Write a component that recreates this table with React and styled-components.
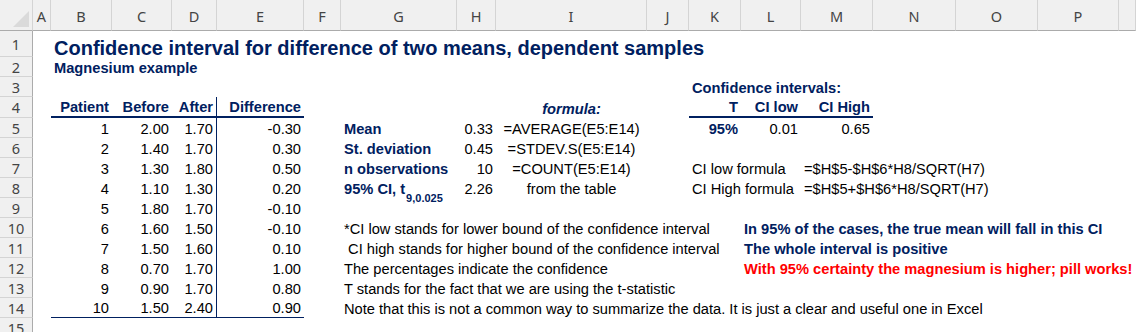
import React from "react";
import styled, { createGlobalStyle } from "styled-components";

const NAVY = "#002060";
const letters = ["A", "B", "C", "D", "E", "F", "G", "H", "I", "J", "K", "L", "M", "N", "O", "P", ""];
const col = (l) => letters.indexOf(l) + 2;

const data = [
  [1, "2.00", "1.70", "-0.30"],
  [2, "1.40", "1.70", "0.30"],
  [3, "1.30", "1.80", "0.50"],
  [4, "1.10", "1.30", "0.20"],
  [5, "1.80", "1.70", "-0.10"],
  [6, "1.60", "1.50", "-0.10"],
  [7, "1.50", "1.60", "0.10"],
  [8, "0.70", "1.70", "1.00"],
  [9, "0.90", "1.70", "0.80"],
  [10, "1.50", "2.40", "0.90"],
];

const stats = [
  ["Mean", "0.33", "=AVERAGE(E5:E14)"],
  ["St. deviation", "0.45", "=STDEV.S(E5:E14)"],
  ["n observations", "10", "=COUNT(E5:E14)"],
  [null, "2.26", "from the table"],
];

const notes = [
  "*CI low stands for lower bound of the confidence interval",
  " CI high stands for higher bound of the confidence interval",
  "The percentages indicate the confidence",
  "T stands for the fact that we are using the t-statistic",
  "Note that this is not a common way to summarize the data. It is just a clear and useful one in Excel",
];

const App = () => {
  return (
    <>
      <GlobalStyle />
      <Sheet>
        <Corner>
          <svg width="33" height="30" viewBox="0 0 33 30">
            <polygon points="13,27 29,27 29,11" fill="#dadada" />
          </svg>
        </Corner>
        {letters.map((l, i) => (
          <ColHead key={"c" + i} $c={i + 2}>{l}</ColHead>
        ))}
        {Array.from({ length: 15 }).map((_, i) => (
          <RowHead key={"r" + i} $r={i + 2}>{i + 1}</RowHead>
        ))}

        {/* titel */}
        <Cell $c={col("B")} $r={2} $span={10} $bold $navy $size="20px">
          Confidence interval for difference of two means, dependent samples
        </Cell>
        <Cell $c={col("B")} $r={3} $span={5} $bold $navy>Magnesium example</Cell>
        <Cell $c={col("K")} $r={4} $span={4} $bold $navy>Confidence intervals:</Cell>

        {/* kopjes */}
        <Cell $c={col("B")} $r={5} $right $bold $navy $thick>Patient</Cell>
        <Cell $c={col("C")} $r={5} $right $bold $navy $thick>Before</Cell>
        <Cell $c={col("D")} $r={5} $right $bold $navy $thick $divider>After</Cell>
        <Cell $c={col("E")} $r={5} $right $bold $navy $thick>Difference</Cell>
        <Cell $c={col("I")} $r={5} $center $bold $italic $navy>formula:</Cell>
        <Cell $c={col("K")} $r={5} $right $bold $navy $thick>T</Cell>
        <Cell $c={col("L")} $r={5} $right $bold $navy $thick>CI low</Cell>
        <Cell $c={col("M")} $r={5} $right $bold $navy $thick>CI High</Cell>

        {data.map((d, i) => (
          <React.Fragment key={"d" + i}>
            <Cell $c={col("B")} $r={i + 6} $right $thin={i === 9}>{d[0]}</Cell>
            <Cell $c={col("C")} $r={i + 6} $right $thin={i === 9}>{d[1]}</Cell>
            <Cell $c={col("D")} $r={i + 6} $right $thin={i === 9} $divider>{d[2]}</Cell>
            <Cell $c={col("E")} $r={i + 6} $right $thin={i === 9}>{d[3]}</Cell>
          </React.Fragment>
        ))}

        {stats.map((s, i) => (
          <React.Fragment key={"s" + i}>
            <Cell $c={col("G")} $r={i + 6} $bold $navy>
              {s[0] || (
                <>
                  95% CI, t<Sub>9,0.025</Sub>
                </>
              )}
            </Cell>
            <Cell $c={col("H")} $r={i + 6} $right>{s[1]}</Cell>
            <Cell $c={col("I")} $r={i + 6} $center>{s[2]}</Cell>
          </React.Fragment>
        ))}

        <Cell $c={col("K")} $r={6} $right $bold $navy>95%</Cell>
        <Cell $c={col("L")} $r={6} $right>0.01</Cell>
        <Cell $c={col("M")} $r={6} $right>0.65</Cell>

        <Cell $c={col("K")} $r={8} $span={2}>CI low formula</Cell>
        <Cell $c={col("M")} $r={8} $span={4}>=$H$5-$H$6*H8/SQRT(H7)</Cell>
        <Cell $c={col("K")} $r={9} $span={2}>CI High formula</Cell>
        <Cell $c={col("M")} $r={9} $span={4}>=$H$5+$H$6*H8/SQRT(H7)</Cell>

        {notes.map((n, i) => (
          <Cell key={"n" + i} $c={col("G")} $r={i + 11} $span={i === 4 ? 10 : 5}>{n}</Cell>
        ))}

        <Cell $c={col("L")} $r={11} $span={6} $bold $navy>
          In 95% of the cases, the true mean will fall in this CI
        </Cell>
        <Cell $c={col("L")} $r={12} $span={6} $bold $navy>
          The whole interval is positive
        </Cell>
        <Cell $c={col("L")} $r={13} $span={6} $bold $red>
          With 95% certainty the magnesium is higher; pill works!
        </Cell>
      </Sheet>
    </>
  );
};

export default App;

const GlobalStyle = createGlobalStyle`
  html, body {
    margin: 0;
    padding: 0;
    background: #ffffff;
    overflow: hidden;
  }
`;

const Sheet = styled.div`
  display: grid;
  width: 1136px;
  height: 332px;
  grid-template-columns: 33px 18px 61px 60px 45px 87px 37px 116px 39px 151px 42px 52px 60px 72px 83px 82px 81px 1fr;
  grid-template-rows: 31px 26px 20px 20px 21px repeat(10, 20px) 1fr;
  font-family: "Liberation Sans", Arial, sans-serif;
  font-size: 14.67px;
  color: #000;
  overflow: hidden;
`;

const Corner = styled.div`
  grid-column: 1;
  grid-row: 1;
  background: #f0f0f0;
  border-right: 1px solid #d4d4d4;
  border-bottom: 1px solid #ababab;
  box-sizing: border-box;
  svg {
    display: block;
  }
`;

const ColHead = styled.div`
  grid-column: ${(p) => p.$c};
  grid-row: 1;
  background: #f0f0f0;
  border-right: 1px solid #d4d4d4;
  border-bottom: 1px solid #ababab;
  box-sizing: border-box;
  display: flex;
  align-items: center;
  justify-content: center;
  font-family: "Noto Sans", "Open Sans", sans-serif;
  font-size: 14.5px;
  color: #444;
  padding-top: 2px;
`;

const RowHead = styled.div`
  grid-column: 1;
  grid-row: ${(p) => p.$r};
  background: #f0f0f0;
  border-right: 1px solid #ababab;
  border-bottom: 1px solid #d4d4d4;
  box-sizing: border-box;
  display: flex;
  align-items: center;
  justify-content: center;
  font-family: "Noto Sans", "Open Sans", sans-serif;
  font-size: 14.5px;
  color: #444;
`;

const Cell = styled.div`
  grid-column: ${(p) => p.$c} / span ${(p) => p.$span || 1};
  grid-row: ${(p) => p.$r};
  box-sizing: border-box;
  display: flex;
  align-items: flex-end;
  justify-content: ${(p) => (p.$right ? "flex-end" : p.$center ? "center" : "flex-start")};
  padding: 0 3px 0 3px;
  line-height: 18px;
  white-space: pre;
  font-size: ${(p) => p.$size || "inherit"};
  font-weight: ${(p) => (p.$bold ? 700 : 400)};
  font-style: ${(p) => (p.$italic ? "italic" : "normal")};
  color: ${(p) => (p.$red ? "#ff0000" : p.$navy ? NAVY : "#000")};
  border-bottom: ${(p) => (p.$thick ? `2px solid ${NAVY}` : p.$thin ? `1px solid ${NAVY}` : "none")};
  border-right: ${(p) => (p.$divider ? `1px solid ${NAVY}` : "none")};
`;

const Sub = styled.sub`
  font-size: 11px;
  vertical-align: -3px;
  line-height: 0;
  margin-left: 1px;
`;
